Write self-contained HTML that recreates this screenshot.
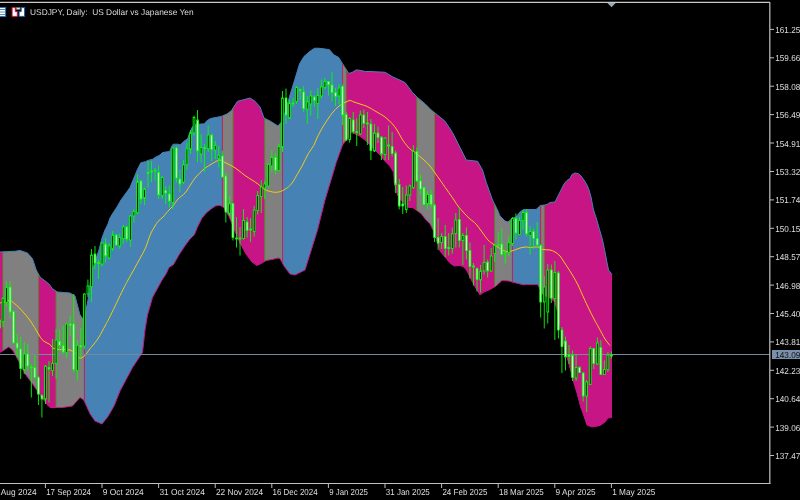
<!DOCTYPE html>
<html><head><meta charset="utf-8"><style>
html,body{margin:0;padding:0;background:#000;width:800px;height:500px;overflow:hidden}
svg{display:block}
text{text-rendering:geometricPrecision}
text{font-family:"Liberation Sans",sans-serif;font-size:8.7px;fill:#DCDCDC}
</style></head><body>
<div style="will-change:transform;width:800px;height:500px"><svg width="800" height="500" viewBox="0 0 800 500">
<rect width="800" height="500" fill="#000"/>
<g>
<polygon points="0.00,252.00 3.00,251.85 3.00,350.68 2.50,351.00 0.00,352.50" fill="#C71585"/>
<polygon points="3.00,251.85 15.00,251.25 20.00,250.50 27.50,253.00 32.50,258.75 36.25,270.00 38.38,273.97 38.38,392.56 32.50,383.75 25.00,373.75 17.50,358.75 12.50,350.00 8.75,347.00 3.00,350.68" fill="#808080"/>
<polygon points="38.38,273.97 40.00,277.00 48.75,283.75 52.50,288.75 56.06,291.07 56.06,407.50 50.00,407.50 47.50,405.00 40.00,395.00 38.38,392.56" fill="#C71585"/>
<polygon points="56.06,291.07 57.50,292.00 70.00,293.00 75.00,296.00 80.00,315.00 84.00,320.00 84.36,318.19 84.36,401.35 83.75,400.00 80.00,397.50 72.50,406.00 62.50,407.50 56.06,407.50" fill="#808080"/>
<polygon points="84.36,318.19 88.00,300.00 92.00,270.00 95.00,262.00 99.00,250.00 102.00,238.00 105.00,230.00 108.00,224.00 110.00,218.00 113.00,213.00 117.00,207.00 121.00,200.00 130.00,187.50 137.20,170.00 140.80,162.80 145.60,161.60 148.00,160.40 152.80,159.20 155.20,157.40 160.00,155.00 162.40,152.60 166.00,152.00 169.60,151.40 172.00,146.00 173.20,144.20 178.00,144.20 180.40,144.80 184.00,141.20 187.60,138.80 190.00,132.00 192.40,126.80 196.00,124.40 204.40,123.80 206.80,120.80 210.50,118.50 221.00,116.50 222.33,115.95 222.33,206.65 220.00,205.25 215.50,206.00 211.00,209.00 206.50,212.75 202.00,218.00 197.50,227.00 194.50,234.50 190.00,239.00 185.50,245.00 179.50,254.00 173.50,264.50 169.00,267.50 166.00,274.00 162.00,280.00 152.50,297.50 147.50,315.00 145.00,330.00 142.50,352.50 137.50,360.00 132.50,367.50 120.00,391.00 114.00,406.00 108.00,416.50 102.00,424.00 95.00,421.00 90.00,413.75 84.36,401.35" fill="#4682B4"/>
<polygon points="222.33,115.95 227.00,114.00 231.50,110.50 232.94,108.28 232.94,226.02 229.00,216.50 223.75,207.50 222.33,206.65" fill="#808080"/>
<polygon points="232.94,108.28 237.50,101.25 242.50,100.00 250.00,98.00 255.00,101.25 260.00,107.00 264.00,118.00 264.78,118.39 264.78,261.27 262.00,263.00 257.00,265.50 252.00,262.00 246.00,254.00 240.00,243.00 235.00,231.00 232.94,226.02" fill="#C71585"/>
<polygon points="264.78,118.39 270.00,121.00 278.00,126.00 282.46,120.64 282.46,263.12 280.00,258.50 278.00,258.00 272.00,259.50 266.00,260.50 264.78,261.27" fill="#808080"/>
<polygon points="282.46,120.64 283.00,120.00 290.00,95.00 295.00,79.00 299.50,64.00 304.00,56.50 310.00,51.25 314.50,48.25 319.00,48.25 325.00,49.00 329.50,49.75 334.00,55.00 338.50,57.25 342.25,63.25 342.60,63.81 342.60,144.87 342.50,145.00 336.25,162.50 332.50,175.00 325.00,200.00 317.50,230.00 311.25,250.00 305.00,270.00 295.00,275.00 290.00,274.00 284.00,266.00 282.46,263.12" fill="#4682B4"/>
<polygon points="342.60,63.81 346.14,69.42 346.14,140.15 342.60,144.87" fill="#808080"/>
<polygon points="346.14,69.42 346.50,70.00 349.00,73.50 353.00,72.00 356.00,70.00 358.00,70.00 365.50,71.50 370.00,71.50 385.00,72.25 392.50,76.75 397.50,79.00 405.00,82.50 412.50,92.50 416.89,96.89 416.89,210.48 416.25,210.00 412.50,207.50 408.75,207.50 405.00,205.00 401.00,200.00 397.50,195.00 394.40,183.75 393.75,172.50 390.00,166.25 385.00,161.25 380.00,155.00 375.00,150.00 370.00,145.00 365.00,140.00 360.00,136.25 355.00,133.75 351.90,131.90 346.25,140.00 346.14,140.15" fill="#C71585"/>
<polygon points="416.89,96.89 417.50,97.50 425.00,103.75 431.25,110.00 434.57,112.66 434.57,234.37 433.00,230.00 430.00,223.75 425.00,218.75 421.25,213.75 416.89,210.48" fill="#808080"/>
<polygon points="434.57,112.66 437.50,115.00 445.00,121.25 452.50,132.50 460.00,147.50 466.25,160.00 477.50,161.25 482.50,170.00 486.25,182.50 492.50,200.00 494.71,204.43 494.71,286.75 490.00,289.50 484.00,292.00 480.00,295.00 474.00,285.00 470.00,277.00 467.00,271.00 464.00,267.00 460.00,265.50 454.00,266.00 450.00,263.00 445.00,257.00 440.00,251.00 437.50,242.50 434.57,234.37" fill="#C71585"/>
<polygon points="494.71,204.43 497.50,210.00 500.00,216.00 505.00,221.00 508.00,222.00 512.00,218.50 512.40,218.35 512.40,282.10 512.00,282.00 509.00,281.00 502.00,280.50 496.00,286.00 494.71,286.75" fill="#808080"/>
<polygon points="512.40,218.35 516.00,217.00 520.00,212.00 524.00,209.50 536.00,209.50 539.00,207.00 540.00,205.50 540.70,205.43 540.70,290.75 540.00,289.00 537.50,284.50 526.00,284.50 524.00,285.00 520.00,284.00 512.40,282.10" fill="#4682B4"/>
<polygon points="540.70,205.43 544.24,205.08 544.24,295.12 542.00,294.00 540.70,290.75" fill="#808080"/>
<polygon points="544.24,205.08 545.00,205.00 548.00,204.00 550.00,202.50 555.00,202.00 557.00,198.00 560.00,192.00 564.00,184.00 567.00,180.50 570.00,178.50 572.00,174.50 575.00,173.00 578.00,173.50 581.00,176.00 584.00,180.00 587.00,185.00 589.00,190.00 591.00,197.00 593.50,210.00 596.50,219.00 599.50,229.50 602.50,240.00 604.70,250.50 607.00,262.50 608.50,270.00 612.00,274.50 612.00,417.50 608.00,418.00 605.00,422.00 600.00,425.50 592.00,427.00 587.00,425.00 584.00,416.00 581.00,408.00 577.00,393.00 573.00,380.00 569.00,364.00 565.00,350.00 560.00,325.00 557.00,310.00 555.00,302.00 550.00,298.00 544.24,295.12" fill="#C71585"/>
<polyline points="0.00,252.00 15.00,251.25 20.00,250.50 27.50,253.00 32.50,258.75 36.25,270.00 40.00,277.00 48.75,283.75 52.50,288.75 57.50,292.00 70.00,293.00 75.00,296.00 80.00,315.00 84.00,320.00 88.00,300.00 92.00,270.00 95.00,262.00 99.00,250.00 102.00,238.00 105.00,230.00 108.00,224.00 110.00,218.00 113.00,213.00 117.00,207.00 121.00,200.00 130.00,187.50 137.20,170.00 140.80,162.80 145.60,161.60 148.00,160.40 152.80,159.20 155.20,157.40 160.00,155.00 162.40,152.60 166.00,152.00 169.60,151.40 172.00,146.00 173.20,144.20 178.00,144.20 180.40,144.80 184.00,141.20 187.60,138.80 190.00,132.00 192.40,126.80 196.00,124.40 204.40,123.80 206.80,120.80 210.50,118.50 221.00,116.50 227.00,114.00 231.50,110.50 237.50,101.25 242.50,100.00 250.00,98.00 255.00,101.25 260.00,107.00 264.00,118.00 270.00,121.00 278.00,126.00 283.00,120.00 290.00,95.00 295.00,79.00 299.50,64.00 304.00,56.50 310.00,51.25 314.50,48.25 319.00,48.25 325.00,49.00 329.50,49.75 334.00,55.00 338.50,57.25 342.25,63.25 346.50,70.00 349.00,73.50 353.00,72.00 356.00,70.00 358.00,70.00 365.50,71.50 370.00,71.50 385.00,72.25 392.50,76.75 397.50,79.00 405.00,82.50 412.50,92.50 417.50,97.50 425.00,103.75 431.25,110.00 437.50,115.00 445.00,121.25 452.50,132.50 460.00,147.50 466.25,160.00 477.50,161.25 482.50,170.00 486.25,182.50 492.50,200.00 497.50,210.00 500.00,216.00 505.00,221.00 508.00,222.00 512.00,218.50 516.00,217.00 520.00,212.00 524.00,209.50 536.00,209.50 539.00,207.00 540.00,205.50 545.00,205.00 548.00,204.00 550.00,202.50 555.00,202.00 557.00,198.00 560.00,192.00 564.00,184.00 567.00,180.50 570.00,178.50 572.00,174.50 575.00,173.00 578.00,173.50 581.00,176.00 584.00,180.00 587.00,185.00 589.00,190.00 591.00,197.00 593.50,210.00 596.50,219.00 599.50,229.50 602.50,240.00 604.70,250.50 607.00,262.50 608.50,270.00 612.00,274.50" fill="none" stroke="#4682B4" stroke-width="1" />
<polyline points="0.00,352.50 2.50,351.00 8.75,347.00 12.50,350.00 17.50,358.75 25.00,373.75 32.50,383.75 40.00,395.00 47.50,405.00 50.00,407.50 62.50,407.50 72.50,406.00 80.00,397.50 83.75,400.00 90.00,413.75 95.00,421.00 102.00,424.00 108.00,416.50 114.00,406.00 120.00,391.00 132.50,367.50 137.50,360.00 142.50,352.50 145.00,330.00 147.50,315.00 152.50,297.50 162.00,280.00 166.00,274.00 169.00,267.50 173.50,264.50 179.50,254.00 185.50,245.00 190.00,239.00 194.50,234.50 197.50,227.00 202.00,218.00 206.50,212.75 211.00,209.00 215.50,206.00 220.00,205.25 223.75,207.50 229.00,216.50 235.00,231.00 240.00,243.00 246.00,254.00 252.00,262.00 257.00,265.50 262.00,263.00 266.00,260.50 272.00,259.50 278.00,258.00 280.00,258.50 284.00,266.00 290.00,274.00 295.00,275.00 305.00,270.00 311.25,250.00 317.50,230.00 325.00,200.00 332.50,175.00 336.25,162.50 342.50,145.00 346.25,140.00 351.90,131.90 355.00,133.75 360.00,136.25 365.00,140.00 370.00,145.00 375.00,150.00 380.00,155.00 385.00,161.25 390.00,166.25 393.75,172.50 394.40,183.75 397.50,195.00 401.00,200.00 405.00,205.00 408.75,207.50 412.50,207.50 416.25,210.00 421.25,213.75 425.00,218.75 430.00,223.75 433.00,230.00 437.50,242.50 440.00,251.00 445.00,257.00 450.00,263.00 454.00,266.00 460.00,265.50 464.00,267.00 467.00,271.00 470.00,277.00 474.00,285.00 480.00,295.00 484.00,292.00 490.00,289.50 496.00,286.00 502.00,280.50 509.00,281.00 512.00,282.00 520.00,284.00 524.00,285.00 526.00,284.50 537.50,284.50 540.00,289.00 542.00,294.00 550.00,298.00 555.00,302.00 557.00,310.00 560.00,325.00 565.00,350.00 569.00,364.00 573.00,380.00 577.00,393.00 581.00,408.00 584.00,416.00 587.00,425.00 592.00,427.00 600.00,425.50 605.00,422.00 608.00,418.00 612.00,417.50" fill="none" stroke="#C71585" stroke-width="1" />
<rect x="2.55" y="251.85" width="0.9" height="98.83" fill="#5F8F2A"/>
<rect x="37.92" y="273.97" width="0.9" height="118.60" fill="#5F8F2A"/>
<rect x="55.61" y="291.07" width="0.9" height="116.43" fill="#5F8F2A"/>
<rect x="83.91" y="318.19" width="0.9" height="83.16" fill="#D21E55"/>
<rect x="221.88" y="115.95" width="0.9" height="90.70" fill="#D21E55"/>
<rect x="232.49" y="108.28" width="0.9" height="117.73" fill="#5F8F2A"/>
<rect x="264.33" y="118.39" width="0.9" height="142.88" fill="#5F8F2A"/>
<rect x="282.01" y="120.64" width="0.9" height="142.47" fill="#D21E55"/>
<rect x="342.15" y="63.81" width="0.9" height="81.06" fill="#D21E55"/>
<rect x="345.69" y="69.42" width="0.9" height="70.73" fill="#5F8F2A"/>
<rect x="416.44" y="96.89" width="0.9" height="113.59" fill="#5F8F2A"/>
<rect x="434.12" y="112.66" width="0.9" height="121.71" fill="#5F8F2A"/>
<rect x="494.26" y="204.43" width="0.9" height="82.33" fill="#5F8F2A"/>
<rect x="511.95" y="218.35" width="0.9" height="63.75" fill="#D21E55"/>
<rect x="540.25" y="205.43" width="0.9" height="85.32" fill="#D21E55"/>
<rect x="543.79" y="205.08" width="0.9" height="90.04" fill="#5F8F2A"/>
<path d="M0.00,303.00 C0.67,302.83 2.50,302.42 4.00,302.00 C5.50,301.58 7.67,300.58 9.00,300.50 C10.33,300.42 11.00,300.92 12.00,301.50 C13.00,302.08 13.83,303.00 15.00,304.00 C16.17,305.00 17.50,306.00 19.00,307.50 C20.50,309.00 22.33,311.08 24.00,313.00 C25.67,314.92 27.50,317.00 29.00,319.00 C30.50,321.00 31.83,323.17 33.00,325.00 C34.17,326.83 35.00,328.33 36.00,330.00 C37.00,331.67 38.00,333.42 39.00,335.00 C40.00,336.58 40.83,338.25 42.00,339.50 C43.17,340.75 44.67,341.67 46.00,342.50 C47.33,343.33 48.83,343.58 50.00,344.50 C51.17,345.42 51.67,347.17 53.00,348.00 C54.33,348.83 56.00,349.25 58.00,349.50 C60.00,349.75 63.00,349.42 65.00,349.50 C67.00,349.58 68.50,349.50 70.00,350.00 C71.50,350.50 72.67,351.33 74.00,352.50 C75.33,353.67 76.83,356.08 78.00,357.00 C79.17,357.92 79.83,358.25 81.00,358.00 C82.17,357.75 83.67,356.83 85.00,355.50 C86.33,354.17 87.50,351.92 89.00,350.00 C90.50,348.08 92.33,346.17 94.00,344.00 C95.67,341.83 97.17,340.00 99.00,337.00 C100.83,334.00 103.04,329.67 105.00,326.00 C106.96,322.33 107.79,321.00 110.75,315.00 C113.71,309.00 119.88,295.83 122.75,290.00 C125.62,284.17 125.96,283.75 128.00,280.00 C130.04,276.25 132.25,272.50 135.00,267.50 C137.75,262.50 142.33,254.42 144.50,250.00 C146.67,245.58 146.92,243.83 148.00,241.00 C149.08,238.17 149.83,235.50 151.00,233.00 C152.17,230.50 153.83,227.92 155.00,226.00 C156.17,224.08 156.67,223.00 158.00,221.50 C159.33,220.00 161.17,218.92 163.00,217.00 C164.83,215.08 167.33,211.83 169.00,210.00 C170.67,208.17 171.50,207.83 173.00,206.00 C174.50,204.17 176.00,201.17 178.00,199.00 C180.00,196.83 182.83,195.50 185.00,193.00 C187.17,190.50 189.17,186.67 191.00,184.00 C192.83,181.33 193.83,179.50 196.00,177.00 C198.17,174.50 201.67,171.00 204.00,169.00 C206.33,167.00 208.00,166.25 210.00,165.00 C212.00,163.75 214.33,162.33 216.00,161.50 C217.67,160.67 218.50,159.83 220.00,160.00 C221.50,160.17 223.00,161.50 225.00,162.50 C227.00,163.50 229.83,164.75 232.00,166.00 C234.17,167.25 235.83,168.42 238.00,170.00 C240.17,171.58 242.67,173.83 245.00,175.50 C247.33,177.17 249.83,178.58 252.00,180.00 C254.17,181.42 256.33,182.75 258.00,184.00 C259.67,185.25 260.63,186.47 262.00,187.50 C263.37,188.53 264.10,189.40 266.20,190.20 C268.30,191.00 272.27,192.07 274.60,192.30 C276.93,192.53 278.33,192.18 280.20,191.60 C282.07,191.02 283.93,190.08 285.80,188.80 C287.67,187.52 289.53,186.23 291.40,183.90 C293.27,181.57 295.13,177.95 297.00,174.80 C298.87,171.65 300.73,168.50 302.60,165.00 C304.47,161.50 306.33,157.07 308.20,153.80 C310.07,150.53 312.42,147.87 313.80,145.40 C315.18,142.93 315.47,141.23 316.50,139.00 C317.53,136.77 318.75,134.33 320.00,132.00 C321.25,129.67 322.67,127.17 324.00,125.00 C325.33,122.83 326.50,121.17 328.00,119.00 C329.50,116.83 331.33,114.00 333.00,112.00 C334.67,110.00 336.50,108.33 338.00,107.00 C339.50,105.67 340.67,104.83 342.00,104.00 C343.33,103.17 344.67,102.58 346.00,102.00 C347.33,101.42 348.67,100.50 350.00,100.50 C351.33,100.50 352.33,101.42 354.00,102.00 C355.67,102.58 358.00,103.33 360.00,104.00 C362.00,104.67 364.33,105.33 366.00,106.00 C367.67,106.67 368.33,107.08 370.00,108.00 C371.67,108.92 373.50,110.00 376.00,111.50 C378.50,113.00 382.33,115.00 385.00,117.00 C387.67,119.00 390.00,121.33 392.00,123.50 C394.00,125.67 395.33,127.42 397.00,130.00 C398.67,132.58 400.17,136.17 402.00,139.00 C403.83,141.83 406.33,145.08 408.00,147.00 C409.67,148.92 410.33,149.17 412.00,150.50 C413.67,151.83 416.00,153.42 418.00,155.00 C420.00,156.58 422.00,158.17 424.00,160.00 C426.00,161.83 428.17,163.83 430.00,166.00 C431.83,168.17 433.33,170.67 435.00,173.00 C436.67,175.33 438.00,177.17 440.00,180.00 C442.00,182.83 444.67,186.67 447.00,190.00 C449.33,193.33 452.17,197.33 454.00,200.00 C455.83,202.67 456.33,203.83 458.00,206.00 C459.67,208.17 462.00,210.83 464.00,213.00 C466.00,215.17 468.00,217.17 470.00,219.00 C472.00,220.83 474.00,221.83 476.00,224.00 C478.00,226.17 480.00,229.33 482.00,232.00 C484.00,234.67 486.17,238.00 488.00,240.00 C489.83,242.00 491.00,242.58 493.00,244.00 C495.00,245.42 497.83,247.25 500.00,248.50 C502.17,249.75 504.33,251.00 506.00,251.50 C507.67,252.00 508.33,251.83 510.00,251.50 C511.67,251.17 514.33,250.08 516.00,249.50 C517.67,248.92 518.33,248.42 520.00,248.00 C521.67,247.58 524.33,247.08 526.00,247.00 C527.67,246.92 528.00,247.50 530.00,247.50 C532.00,247.50 535.83,246.67 538.00,247.00 C540.17,247.33 541.00,249.00 543.00,249.50 C545.00,250.00 548.00,249.58 550.00,250.00 C552.00,250.42 553.33,251.00 555.00,252.00 C556.67,253.00 558.50,254.33 560.00,256.00 C561.50,257.67 562.67,260.00 564.00,262.00 C565.33,264.00 566.50,265.67 568.00,268.00 C569.50,270.33 571.33,273.17 573.00,276.00 C574.67,278.83 576.50,282.00 578.00,285.00 C579.50,288.00 580.33,290.33 582.00,294.00 C583.67,297.67 586.00,302.83 588.00,307.00 C590.00,311.17 592.17,315.50 594.00,319.00 C595.83,322.50 597.17,324.67 599.00,328.00 C600.83,331.33 603.17,336.08 605.00,339.00 C606.83,341.92 609.17,344.42 610.00,345.50" fill="none" stroke="#F2CC10" stroke-width="1"/>
<line x1="0" y1="354.5" x2="770" y2="354.5" stroke="#778899" stroke-width="1"/>
<rect x="-0.988" y="315.00" width="0.9" height="19.00" fill="#00FF00"/>
<rect x="-1.413" y="320.00" width="1.75" height="8.00" fill="#FFF" stroke="#00FF00" stroke-width="0.9"/>
<rect x="2.550" y="297.00" width="0.9" height="30.00" fill="#00FF00"/>
<rect x="2.125" y="298.50" width="1.75" height="23.00" fill="#000" stroke="#00FF00" stroke-width="0.9"/>
<rect x="6.087" y="281.50" width="0.9" height="25.00" fill="#00FF00"/>
<rect x="5.662" y="287.00" width="1.75" height="15.50" fill="#000" stroke="#00FF00" stroke-width="0.9"/>
<rect x="9.625" y="281.00" width="0.9" height="37.00" fill="#00FF00"/>
<rect x="9.200" y="287.00" width="1.75" height="25.00" fill="#FFF" stroke="#00FF00" stroke-width="0.9"/>
<rect x="13.163" y="310.00" width="0.9" height="34.00" fill="#00FF00"/>
<rect x="12.738" y="311.50" width="1.75" height="31.50" fill="#FFF" stroke="#00FF00" stroke-width="0.9"/>
<rect x="16.700" y="334.00" width="0.9" height="23.50" fill="#00FF00"/>
<rect x="16.275" y="343.00" width="1.75" height="5.00" fill="#FFF" stroke="#00FF00" stroke-width="0.9"/>
<rect x="20.238" y="337.00" width="0.9" height="42.00" fill="#00FF00"/>
<rect x="19.812" y="349.00" width="1.75" height="19.50" fill="#FFF" stroke="#00FF00" stroke-width="0.9"/>
<rect x="23.775" y="342.00" width="0.9" height="32.00" fill="#00FF00"/>
<rect x="23.350" y="354.00" width="1.75" height="15.50" fill="#000" stroke="#00FF00" stroke-width="0.9"/>
<rect x="27.312" y="344.00" width="0.9" height="26.00" fill="#00FF00"/>
<rect x="26.887" y="354.00" width="1.75" height="12.00" fill="#FFF" stroke="#00FF00" stroke-width="0.9"/>
<rect x="30.850" y="364.00" width="0.9" height="33.50" fill="#00FF00"/>
<rect x="30.425" y="367.00" width="1.75" height="1.00" fill="#FFF" stroke="#00FF00" stroke-width="0.9"/>
<rect x="34.388" y="355.00" width="0.9" height="24.00" fill="#00FF00"/>
<rect x="33.963" y="367.50" width="1.75" height="10.00" fill="#FFF" stroke="#00FF00" stroke-width="0.9"/>
<rect x="37.925" y="376.00" width="0.9" height="29.00" fill="#00FF00"/>
<rect x="37.500" y="377.50" width="1.75" height="16.50" fill="#FFF" stroke="#00FF00" stroke-width="0.9"/>
<rect x="41.462" y="394.00" width="0.9" height="23.50" fill="#00FF00"/>
<rect x="41.038" y="395.60" width="1.75" height="3.40" fill="#FFF" stroke="#00FF00" stroke-width="0.9"/>
<rect x="45.000" y="365.00" width="0.9" height="39.00" fill="#00FF00"/>
<rect x="44.575" y="366.00" width="1.75" height="33.00" fill="#000" stroke="#00FF00" stroke-width="0.9"/>
<rect x="48.538" y="361.00" width="0.9" height="41.50" fill="#00FF00"/>
<rect x="48.113" y="367.50" width="1.75" height="1.50" fill="#FFF" stroke="#00FF00" stroke-width="0.9"/>
<rect x="52.075" y="339.00" width="0.9" height="37.00" fill="#00FF00"/>
<rect x="51.650" y="363.50" width="1.75" height="7.00" fill="#000" stroke="#00FF00" stroke-width="0.9"/>
<rect x="55.612" y="329.00" width="0.9" height="50.00" fill="#00FF00"/>
<rect x="55.188" y="340.00" width="1.75" height="23.50" fill="#000" stroke="#00FF00" stroke-width="0.9"/>
<rect x="59.150" y="330.00" width="0.9" height="21.00" fill="#00FF00"/>
<rect x="58.725" y="341.00" width="1.75" height="4.60" fill="#FFF" stroke="#00FF00" stroke-width="0.9"/>
<rect x="62.688" y="325.60" width="0.9" height="28.40" fill="#00FF00"/>
<rect x="62.263" y="345.60" width="1.75" height="6.40" fill="#FFF" stroke="#00FF00" stroke-width="0.9"/>
<rect x="66.225" y="323.00" width="0.9" height="35.00" fill="#00FF00"/>
<rect x="65.800" y="324.00" width="1.75" height="28.50" fill="#000" stroke="#00FF00" stroke-width="0.9"/>
<rect x="69.763" y="315.60" width="0.9" height="20.40" fill="#00FF00"/>
<rect x="69.338" y="324.00" width="1.75" height="1.60" fill="#FFF" stroke="#00FF00" stroke-width="0.9"/>
<rect x="73.300" y="294.00" width="0.9" height="78.50" fill="#00FF00"/>
<rect x="72.875" y="324.00" width="1.75" height="45.50" fill="#FFF" stroke="#00FF00" stroke-width="0.9"/>
<rect x="76.838" y="340.00" width="0.9" height="40.60" fill="#00FF00"/>
<rect x="76.413" y="345.60" width="1.75" height="25.00" fill="#000" stroke="#00FF00" stroke-width="0.9"/>
<rect x="80.375" y="328.00" width="0.9" height="29.50" fill="#00FF00"/>
<rect x="79.950" y="345.60" width="1.75" height="1.40" fill="#FFF" stroke="#00FF00" stroke-width="0.9"/>
<rect x="83.912" y="293.00" width="0.9" height="56.00" fill="#00FF00"/>
<rect x="83.487" y="294.00" width="1.75" height="52.00" fill="#000" stroke="#00FF00" stroke-width="0.9"/>
<rect x="87.450" y="279.50" width="0.9" height="17.50" fill="#00FF00"/>
<rect x="87.025" y="286.00" width="1.75" height="8.00" fill="#000" stroke="#00FF00" stroke-width="0.9"/>
<rect x="90.987" y="249.00" width="0.9" height="53.00" fill="#00FF00"/>
<rect x="90.562" y="255.00" width="1.75" height="31.50" fill="#000" stroke="#00FF00" stroke-width="0.9"/>
<rect x="94.525" y="246.00" width="0.9" height="23.50" fill="#00FF00"/>
<rect x="94.100" y="254.00" width="1.75" height="9.00" fill="#FFF" stroke="#00FF00" stroke-width="0.9"/>
<rect x="98.062" y="259.50" width="0.9" height="19.50" fill="#00FF00"/>
<rect x="97.638" y="262.50" width="1.75" height="1.00" fill="#FFF" stroke="#00FF00" stroke-width="0.9"/>
<rect x="101.600" y="242.00" width="0.9" height="24.50" fill="#00FF00"/>
<rect x="101.175" y="243.00" width="1.75" height="21.00" fill="#000" stroke="#00FF00" stroke-width="0.9"/>
<rect x="105.138" y="238.00" width="0.9" height="24.50" fill="#00FF00"/>
<rect x="104.713" y="244.00" width="1.75" height="12.00" fill="#FFF" stroke="#00FF00" stroke-width="0.9"/>
<rect x="108.675" y="243.00" width="0.9" height="16.50" fill="#00FF00"/>
<rect x="108.250" y="246.00" width="1.75" height="12.00" fill="#000" stroke="#00FF00" stroke-width="0.9"/>
<rect x="112.213" y="231.00" width="0.9" height="20.00" fill="#00FF00"/>
<rect x="111.788" y="235.00" width="1.75" height="14.00" fill="#000" stroke="#00FF00" stroke-width="0.9"/>
<rect x="115.750" y="234.00" width="0.9" height="12.00" fill="#00FF00"/>
<rect x="115.325" y="235.00" width="1.75" height="10.00" fill="#FFF" stroke="#00FF00" stroke-width="0.9"/>
<rect x="119.287" y="233.50" width="0.9" height="15.50" fill="#00FF00"/>
<rect x="118.862" y="237.50" width="1.75" height="8.50" fill="#000" stroke="#00FF00" stroke-width="0.9"/>
<rect x="122.825" y="225.00" width="0.9" height="19.00" fill="#00FF00"/>
<rect x="122.400" y="227.00" width="1.75" height="11.50" fill="#000" stroke="#00FF00" stroke-width="0.9"/>
<rect x="126.362" y="226.00" width="0.9" height="16.00" fill="#00FF00"/>
<rect x="125.938" y="227.00" width="1.75" height="12.00" fill="#FFF" stroke="#00FF00" stroke-width="0.9"/>
<rect x="129.900" y="215.00" width="0.9" height="32.00" fill="#00FF00"/>
<rect x="129.475" y="216.00" width="1.75" height="24.00" fill="#000" stroke="#00FF00" stroke-width="0.9"/>
<rect x="133.438" y="209.00" width="0.9" height="13.50" fill="#00FF00"/>
<rect x="133.013" y="211.50" width="1.75" height="4.50" fill="#000" stroke="#00FF00" stroke-width="0.9"/>
<rect x="136.975" y="174.00" width="0.9" height="39.50" fill="#00FF00"/>
<rect x="136.550" y="182.00" width="1.75" height="31.00" fill="#000" stroke="#00FF00" stroke-width="0.9"/>
<rect x="140.513" y="180.00" width="0.9" height="24.00" fill="#00FF00"/>
<rect x="140.088" y="181.00" width="1.75" height="18.00" fill="#FFF" stroke="#00FF00" stroke-width="0.9"/>
<rect x="144.050" y="187.50" width="0.9" height="17.50" fill="#00FF00"/>
<rect x="143.625" y="189.00" width="1.75" height="9.00" fill="#000" stroke="#00FF00" stroke-width="0.9"/>
<rect x="147.588" y="161.00" width="0.9" height="27.00" fill="#00FF00"/>
<rect x="147.162" y="172.50" width="1.75" height="1.00" fill="#FFF" stroke="#00FF00" stroke-width="0.9"/>
<rect x="151.125" y="161.00" width="0.9" height="21.00" fill="#00FF00"/>
<rect x="150.700" y="171.00" width="1.75" height="1.00" fill="#FFF" stroke="#00FF00" stroke-width="0.9"/>
<rect x="154.663" y="168.00" width="0.9" height="12.60" fill="#00FF00"/>
<rect x="154.238" y="170.00" width="1.75" height="0.90" fill="#FFF" stroke="#00FF00" stroke-width="0.9"/>
<rect x="158.200" y="165.60" width="0.9" height="33.40" fill="#00FF00"/>
<rect x="157.775" y="172.50" width="1.75" height="22.50" fill="#FFF" stroke="#00FF00" stroke-width="0.9"/>
<rect x="161.738" y="175.60" width="0.9" height="23.40" fill="#00FF00"/>
<rect x="161.312" y="177.50" width="1.75" height="18.10" fill="#000" stroke="#00FF00" stroke-width="0.9"/>
<rect x="165.275" y="186.00" width="0.9" height="18.00" fill="#00FF00"/>
<rect x="164.850" y="190.60" width="1.75" height="2.40" fill="#FFF" stroke="#00FF00" stroke-width="0.9"/>
<rect x="168.813" y="185.60" width="0.9" height="21.90" fill="#00FF00"/>
<rect x="168.388" y="194.00" width="1.75" height="7.00" fill="#FFF" stroke="#00FF00" stroke-width="0.9"/>
<rect x="172.350" y="147.50" width="0.9" height="61.50" fill="#00FF00"/>
<rect x="171.925" y="148.00" width="1.75" height="54.50" fill="#000" stroke="#00FF00" stroke-width="0.9"/>
<rect x="175.888" y="146.00" width="0.9" height="36.50" fill="#00FF00"/>
<rect x="175.463" y="148.00" width="1.75" height="30.00" fill="#FFF" stroke="#00FF00" stroke-width="0.9"/>
<rect x="179.425" y="170.00" width="0.9" height="22.50" fill="#00FF00"/>
<rect x="179.000" y="179.00" width="1.75" height="5.00" fill="#FFF" stroke="#00FF00" stroke-width="0.9"/>
<rect x="182.963" y="160.00" width="0.9" height="24.00" fill="#00FF00"/>
<rect x="182.537" y="165.00" width="1.75" height="17.00" fill="#000" stroke="#00FF00" stroke-width="0.9"/>
<rect x="186.500" y="142.50" width="0.9" height="27.50" fill="#00FF00"/>
<rect x="186.075" y="148.75" width="1.75" height="15.65" fill="#000" stroke="#00FF00" stroke-width="0.9"/>
<rect x="190.038" y="130.00" width="0.9" height="24.00" fill="#00FF00"/>
<rect x="189.613" y="133.00" width="1.75" height="16.40" fill="#000" stroke="#00FF00" stroke-width="0.9"/>
<rect x="193.575" y="115.60" width="0.9" height="20.00" fill="#00FF00"/>
<rect x="193.150" y="117.50" width="1.75" height="15.50" fill="#000" stroke="#00FF00" stroke-width="0.9"/>
<rect x="197.113" y="110.00" width="0.9" height="52.00" fill="#00FF00"/>
<rect x="196.688" y="120.00" width="1.75" height="31.00" fill="#FFF" stroke="#00FF00" stroke-width="0.9"/>
<rect x="200.650" y="134.00" width="0.9" height="28.50" fill="#00FF00"/>
<rect x="200.225" y="147.50" width="1.75" height="6.50" fill="#000" stroke="#00FF00" stroke-width="0.9"/>
<rect x="204.188" y="144.00" width="0.9" height="28.00" fill="#00FF00"/>
<rect x="203.763" y="147.50" width="1.75" height="0.90" fill="#FFF" stroke="#00FF00" stroke-width="0.9"/>
<rect x="207.725" y="125.00" width="0.9" height="27.00" fill="#00FF00"/>
<rect x="207.300" y="135.00" width="1.75" height="13.75" fill="#000" stroke="#00FF00" stroke-width="0.9"/>
<rect x="211.263" y="133.75" width="0.9" height="27.25" fill="#00FF00"/>
<rect x="210.838" y="135.00" width="1.75" height="14.40" fill="#FFF" stroke="#00FF00" stroke-width="0.9"/>
<rect x="214.800" y="141.00" width="0.9" height="18.00" fill="#00FF00"/>
<rect x="214.375" y="145.60" width="1.75" height="4.40" fill="#000" stroke="#00FF00" stroke-width="0.9"/>
<rect x="218.338" y="146.00" width="0.9" height="21.50" fill="#00FF00"/>
<rect x="217.912" y="155.60" width="1.75" height="2.40" fill="#000" stroke="#00FF00" stroke-width="0.9"/>
<rect x="267.863" y="163.00" width="0.9" height="24.50" fill="#00FF00"/>
<rect x="267.438" y="164.40" width="1.75" height="21.60" fill="#000" stroke="#00FF00" stroke-width="0.9"/>
<rect x="271.400" y="150.50" width="0.9" height="21.50" fill="#00FF00"/>
<rect x="270.975" y="157.50" width="1.75" height="8.50" fill="#000" stroke="#00FF00" stroke-width="0.9"/>
<rect x="274.938" y="153.00" width="0.9" height="21.40" fill="#00FF00"/>
<rect x="274.512" y="157.50" width="1.75" height="12.50" fill="#FFF" stroke="#00FF00" stroke-width="0.9"/>
<rect x="278.475" y="143.50" width="0.9" height="27.50" fill="#00FF00"/>
<rect x="278.050" y="146.50" width="1.75" height="24.10" fill="#000" stroke="#00FF00" stroke-width="0.9"/>
<rect x="282.013" y="91.00" width="0.9" height="61.00" fill="#00FF00"/>
<rect x="281.588" y="98.00" width="1.75" height="49.00" fill="#000" stroke="#00FF00" stroke-width="0.9"/>
<rect x="221.875" y="151.00" width="0.9" height="26.00" fill="#00FF00"/>
<rect x="221.450" y="156.00" width="1.75" height="21.00" fill="#FFF" stroke="#00FF00" stroke-width="0.9"/>
<rect x="225.413" y="172.50" width="0.9" height="50.00" fill="#00FF00"/>
<rect x="224.988" y="176.00" width="1.75" height="36.00" fill="#FFF" stroke="#00FF00" stroke-width="0.9"/>
<rect x="228.950" y="195.60" width="0.9" height="19.90" fill="#00FF00"/>
<rect x="228.525" y="204.00" width="1.75" height="9.00" fill="#000" stroke="#00FF00" stroke-width="0.9"/>
<rect x="232.488" y="203.50" width="0.9" height="37.00" fill="#00FF00"/>
<rect x="232.062" y="203.50" width="1.75" height="34.00" fill="#FFF" stroke="#00FF00" stroke-width="0.9"/>
<rect x="236.025" y="217.00" width="0.9" height="30.50" fill="#00FF00"/>
<rect x="235.600" y="238.00" width="1.75" height="1.00" fill="#FFF" stroke="#00FF00" stroke-width="0.9"/>
<rect x="239.563" y="227.00" width="0.9" height="28.50" fill="#00FF00"/>
<rect x="239.138" y="238.00" width="1.75" height="1.00" fill="#FFF" stroke="#00FF00" stroke-width="0.9"/>
<rect x="243.100" y="209.00" width="0.9" height="30.50" fill="#00FF00"/>
<rect x="242.675" y="220.50" width="1.75" height="18.00" fill="#000" stroke="#00FF00" stroke-width="0.9"/>
<rect x="246.638" y="217.00" width="0.9" height="20.50" fill="#00FF00"/>
<rect x="246.213" y="222.00" width="1.75" height="8.50" fill="#FFF" stroke="#00FF00" stroke-width="0.9"/>
<rect x="250.175" y="218.00" width="0.9" height="24.00" fill="#00FF00"/>
<rect x="249.750" y="229.00" width="1.75" height="1.00" fill="#FFF" stroke="#00FF00" stroke-width="0.9"/>
<rect x="253.713" y="206.00" width="0.9" height="30.50" fill="#00FF00"/>
<rect x="253.287" y="210.00" width="1.75" height="21.50" fill="#000" stroke="#00FF00" stroke-width="0.9"/>
<rect x="257.250" y="191.00" width="0.9" height="23.50" fill="#00FF00"/>
<rect x="256.825" y="195.50" width="1.75" height="15.00" fill="#000" stroke="#00FF00" stroke-width="0.9"/>
<rect x="260.788" y="180.00" width="0.9" height="33.00" fill="#00FF00"/>
<rect x="260.363" y="187.00" width="1.75" height="9.50" fill="#000" stroke="#00FF00" stroke-width="0.9"/>
<rect x="264.325" y="180.60" width="0.9" height="18.40" fill="#00FF00"/>
<rect x="263.900" y="184.00" width="1.75" height="4.00" fill="#000" stroke="#00FF00" stroke-width="0.9"/>
<rect x="285.550" y="88.50" width="0.9" height="35.50" fill="#00FF00"/>
<rect x="285.125" y="98.00" width="1.75" height="17.00" fill="#FFF" stroke="#00FF00" stroke-width="0.9"/>
<rect x="289.088" y="100.00" width="0.9" height="19.00" fill="#00FF00"/>
<rect x="288.663" y="103.50" width="1.75" height="14.50" fill="#000" stroke="#00FF00" stroke-width="0.9"/>
<rect x="292.625" y="98.00" width="0.9" height="9.00" fill="#00FF00"/>
<rect x="292.200" y="103.00" width="1.75" height="1.00" fill="#FFF" stroke="#00FF00" stroke-width="0.9"/>
<rect x="296.163" y="86.00" width="0.9" height="18.00" fill="#00FF00"/>
<rect x="295.738" y="87.50" width="1.75" height="14.00" fill="#000" stroke="#00FF00" stroke-width="0.9"/>
<rect x="299.700" y="88.50" width="0.9" height="11.50" fill="#00FF00"/>
<rect x="299.275" y="89.50" width="1.75" height="1.00" fill="#FFF" stroke="#00FF00" stroke-width="0.9"/>
<rect x="303.238" y="86.00" width="0.9" height="26.00" fill="#00FF00"/>
<rect x="302.812" y="92.00" width="1.75" height="16.50" fill="#FFF" stroke="#00FF00" stroke-width="0.9"/>
<rect x="306.775" y="96.00" width="0.9" height="28.00" fill="#00FF00"/>
<rect x="306.350" y="102.00" width="1.75" height="7.00" fill="#000" stroke="#00FF00" stroke-width="0.9"/>
<rect x="310.312" y="90.50" width="0.9" height="25.00" fill="#00FF00"/>
<rect x="309.887" y="96.00" width="1.75" height="8.00" fill="#000" stroke="#00FF00" stroke-width="0.9"/>
<rect x="313.850" y="95.00" width="0.9" height="12.00" fill="#00FF00"/>
<rect x="313.425" y="97.00" width="1.75" height="3.50" fill="#FFF" stroke="#00FF00" stroke-width="0.9"/>
<rect x="317.388" y="88.00" width="0.9" height="31.00" fill="#00FF00"/>
<rect x="316.963" y="95.50" width="1.75" height="8.00" fill="#000" stroke="#00FF00" stroke-width="0.9"/>
<rect x="320.925" y="79.50" width="0.9" height="19.00" fill="#00FF00"/>
<rect x="320.500" y="87.00" width="1.75" height="9.00" fill="#000" stroke="#00FF00" stroke-width="0.9"/>
<rect x="324.463" y="78.00" width="0.9" height="11.50" fill="#00FF00"/>
<rect x="324.038" y="81.50" width="1.75" height="6.00" fill="#000" stroke="#00FF00" stroke-width="0.9"/>
<rect x="328.000" y="81.00" width="0.9" height="14.50" fill="#00FF00"/>
<rect x="327.575" y="81.50" width="1.75" height="3.50" fill="#FFF" stroke="#00FF00" stroke-width="0.9"/>
<rect x="331.538" y="72.00" width="0.9" height="29.50" fill="#00FF00"/>
<rect x="331.113" y="85.00" width="1.75" height="7.50" fill="#FFF" stroke="#00FF00" stroke-width="0.9"/>
<rect x="335.075" y="88.00" width="0.9" height="18.00" fill="#00FF00"/>
<rect x="334.650" y="92.50" width="1.75" height="4.00" fill="#FFF" stroke="#00FF00" stroke-width="0.9"/>
<rect x="338.613" y="84.00" width="0.9" height="20.00" fill="#00FF00"/>
<rect x="338.188" y="88.00" width="1.75" height="8.00" fill="#000" stroke="#00FF00" stroke-width="0.9"/>
<rect x="342.150" y="84.50" width="0.9" height="40.50" fill="#00FF00"/>
<rect x="341.725" y="86.50" width="1.75" height="28.50" fill="#FFF" stroke="#00FF00" stroke-width="0.9"/>
<rect x="345.688" y="112.00" width="0.9" height="29.00" fill="#00FF00"/>
<rect x="345.262" y="114.50" width="1.75" height="25.50" fill="#FFF" stroke="#00FF00" stroke-width="0.9"/>
<rect x="349.225" y="117.00" width="0.9" height="25.50" fill="#00FF00"/>
<rect x="348.800" y="118.50" width="1.75" height="21.00" fill="#000" stroke="#00FF00" stroke-width="0.9"/>
<rect x="352.763" y="112.00" width="0.9" height="22.00" fill="#00FF00"/>
<rect x="352.338" y="120.00" width="1.75" height="11.50" fill="#FFF" stroke="#00FF00" stroke-width="0.9"/>
<rect x="356.300" y="118.50" width="0.9" height="27.50" fill="#00FF00"/>
<rect x="355.875" y="131.50" width="1.75" height="1.00" fill="#FFF" stroke="#00FF00" stroke-width="0.9"/>
<rect x="359.838" y="110.50" width="0.9" height="24.50" fill="#00FF00"/>
<rect x="359.413" y="115.00" width="1.75" height="19.00" fill="#000" stroke="#00FF00" stroke-width="0.9"/>
<rect x="363.375" y="109.50" width="0.9" height="18.50" fill="#00FF00"/>
<rect x="362.950" y="115.00" width="1.75" height="8.50" fill="#FFF" stroke="#00FF00" stroke-width="0.9"/>
<rect x="366.913" y="112.00" width="0.9" height="33.00" fill="#00FF00"/>
<rect x="366.488" y="123.00" width="1.75" height="1.00" fill="#FFF" stroke="#00FF00" stroke-width="0.9"/>
<rect x="370.450" y="119.00" width="0.9" height="41.00" fill="#00FF00"/>
<rect x="370.025" y="124.00" width="1.75" height="26.50" fill="#FFF" stroke="#00FF00" stroke-width="0.9"/>
<rect x="373.988" y="124.00" width="0.9" height="28.00" fill="#00FF00"/>
<rect x="373.562" y="133.00" width="1.75" height="18.00" fill="#000" stroke="#00FF00" stroke-width="0.9"/>
<rect x="377.525" y="126.50" width="0.9" height="16.50" fill="#00FF00"/>
<rect x="377.100" y="133.00" width="1.75" height="4.50" fill="#FFF" stroke="#00FF00" stroke-width="0.9"/>
<rect x="381.062" y="136.50" width="0.9" height="23.50" fill="#00FF00"/>
<rect x="380.637" y="137.00" width="1.75" height="17.00" fill="#FFF" stroke="#00FF00" stroke-width="0.9"/>
<rect x="384.600" y="137.50" width="0.9" height="22.50" fill="#00FF00"/>
<rect x="384.175" y="138.00" width="1.75" height="16.50" fill="#000" stroke="#00FF00" stroke-width="0.9"/>
<rect x="388.138" y="125.50" width="0.9" height="34.50" fill="#00FF00"/>
<rect x="387.713" y="145.00" width="1.75" height="1.00" fill="#FFF" stroke="#00FF00" stroke-width="0.9"/>
<rect x="391.675" y="132.00" width="0.9" height="24.50" fill="#00FF00"/>
<rect x="391.250" y="146.50" width="1.75" height="7.00" fill="#FFF" stroke="#00FF00" stroke-width="0.9"/>
<rect x="395.213" y="150.50" width="0.9" height="42.50" fill="#00FF00"/>
<rect x="394.788" y="153.00" width="1.75" height="31.40" fill="#FFF" stroke="#00FF00" stroke-width="0.9"/>
<rect x="398.750" y="179.00" width="0.9" height="30.40" fill="#00FF00"/>
<rect x="398.325" y="184.40" width="1.75" height="21.60" fill="#FFF" stroke="#00FF00" stroke-width="0.9"/>
<rect x="402.288" y="187.00" width="0.9" height="27.00" fill="#00FF00"/>
<rect x="401.863" y="204.00" width="1.75" height="2.00" fill="#FFF" stroke="#00FF00" stroke-width="0.9"/>
<rect x="405.825" y="185.60" width="0.9" height="27.40" fill="#00FF00"/>
<rect x="405.400" y="195.00" width="1.75" height="14.40" fill="#000" stroke="#00FF00" stroke-width="0.9"/>
<rect x="409.363" y="184.40" width="0.9" height="16.60" fill="#00FF00"/>
<rect x="408.938" y="186.00" width="1.75" height="9.00" fill="#000" stroke="#00FF00" stroke-width="0.9"/>
<rect x="412.900" y="145.00" width="0.9" height="44.00" fill="#00FF00"/>
<rect x="412.475" y="151.50" width="1.75" height="36.00" fill="#000" stroke="#00FF00" stroke-width="0.9"/>
<rect x="416.438" y="147.50" width="0.9" height="34.50" fill="#00FF00"/>
<rect x="416.012" y="151.50" width="1.75" height="29.50" fill="#FFF" stroke="#00FF00" stroke-width="0.9"/>
<rect x="419.975" y="174.40" width="0.9" height="20.00" fill="#00FF00"/>
<rect x="419.550" y="181.00" width="1.75" height="8.00" fill="#FFF" stroke="#00FF00" stroke-width="0.9"/>
<rect x="423.513" y="186.00" width="0.9" height="19.60" fill="#00FF00"/>
<rect x="423.088" y="187.50" width="1.75" height="16.90" fill="#FFF" stroke="#00FF00" stroke-width="0.9"/>
<rect x="427.050" y="191.00" width="0.9" height="18.40" fill="#00FF00"/>
<rect x="426.625" y="194.40" width="1.75" height="9.35" fill="#000" stroke="#00FF00" stroke-width="0.9"/>
<rect x="430.588" y="189.40" width="0.9" height="18.10" fill="#00FF00"/>
<rect x="430.163" y="194.40" width="1.75" height="10.00" fill="#FFF" stroke="#00FF00" stroke-width="0.9"/>
<rect x="434.125" y="203.75" width="0.9" height="38.25" fill="#00FF00"/>
<rect x="433.700" y="205.00" width="1.75" height="32.50" fill="#FFF" stroke="#00FF00" stroke-width="0.9"/>
<rect x="437.663" y="218.00" width="0.9" height="32.00" fill="#00FF00"/>
<rect x="437.238" y="237.50" width="1.75" height="5.50" fill="#FFF" stroke="#00FF00" stroke-width="0.9"/>
<rect x="441.200" y="233.00" width="0.9" height="16.00" fill="#00FF00"/>
<rect x="440.775" y="236.50" width="1.75" height="6.00" fill="#000" stroke="#00FF00" stroke-width="0.9"/>
<rect x="444.738" y="225.00" width="0.9" height="32.00" fill="#00FF00"/>
<rect x="444.312" y="236.50" width="1.75" height="12.00" fill="#FFF" stroke="#00FF00" stroke-width="0.9"/>
<rect x="448.275" y="233.00" width="0.9" height="22.50" fill="#00FF00"/>
<rect x="447.850" y="247.50" width="1.75" height="1.00" fill="#FFF" stroke="#00FF00" stroke-width="0.9"/>
<rect x="451.812" y="227.50" width="0.9" height="26.00" fill="#00FF00"/>
<rect x="451.387" y="234.00" width="1.75" height="14.50" fill="#000" stroke="#00FF00" stroke-width="0.9"/>
<rect x="455.350" y="213.00" width="0.9" height="34.50" fill="#00FF00"/>
<rect x="454.925" y="220.00" width="1.75" height="13.50" fill="#000" stroke="#00FF00" stroke-width="0.9"/>
<rect x="458.888" y="207.00" width="0.9" height="40.50" fill="#00FF00"/>
<rect x="458.463" y="219.50" width="1.75" height="21.00" fill="#FFF" stroke="#00FF00" stroke-width="0.9"/>
<rect x="462.425" y="233.00" width="0.9" height="32.00" fill="#00FF00"/>
<rect x="462.000" y="235.50" width="1.75" height="5.00" fill="#000" stroke="#00FF00" stroke-width="0.9"/>
<rect x="465.963" y="227.50" width="0.9" height="32.00" fill="#00FF00"/>
<rect x="465.538" y="235.50" width="1.75" height="15.00" fill="#FFF" stroke="#00FF00" stroke-width="0.9"/>
<rect x="483.650" y="245.00" width="0.9" height="29.50" fill="#00FF00"/>
<rect x="483.225" y="262.50" width="1.75" height="8.50" fill="#000" stroke="#00FF00" stroke-width="0.9"/>
<rect x="487.188" y="259.50" width="0.9" height="18.00" fill="#00FF00"/>
<rect x="486.762" y="262.00" width="1.75" height="9.00" fill="#FFF" stroke="#00FF00" stroke-width="0.9"/>
<rect x="490.725" y="248.00" width="0.9" height="24.00" fill="#00FF00"/>
<rect x="490.300" y="256.00" width="1.75" height="15.00" fill="#000" stroke="#00FF00" stroke-width="0.9"/>
<rect x="494.263" y="244.00" width="0.9" height="18.00" fill="#00FF00"/>
<rect x="493.838" y="245.50" width="1.75" height="8.00" fill="#000" stroke="#00FF00" stroke-width="0.9"/>
<rect x="497.800" y="232.00" width="0.9" height="15.50" fill="#00FF00"/>
<rect x="497.375" y="244.50" width="1.75" height="1.00" fill="#FFF" stroke="#00FF00" stroke-width="0.9"/>
<rect x="501.338" y="228.00" width="0.9" height="27.50" fill="#00FF00"/>
<rect x="500.913" y="244.00" width="1.75" height="10.50" fill="#FFF" stroke="#00FF00" stroke-width="0.9"/>
<rect x="504.875" y="250.00" width="0.9" height="13.50" fill="#00FF00"/>
<rect x="504.450" y="253.00" width="1.75" height="1.00" fill="#000" stroke="#00FF00" stroke-width="0.9"/>
<rect x="508.413" y="236.50" width="0.9" height="20.00" fill="#00FF00"/>
<rect x="507.988" y="242.50" width="1.75" height="10.00" fill="#000" stroke="#00FF00" stroke-width="0.9"/>
<rect x="469.500" y="242.50" width="0.9" height="36.00" fill="#00FF00"/>
<rect x="469.075" y="250.50" width="1.75" height="16.00" fill="#FFF" stroke="#00FF00" stroke-width="0.9"/>
<rect x="473.038" y="263.00" width="0.9" height="22.50" fill="#00FF00"/>
<rect x="472.613" y="266.00" width="1.75" height="1.00" fill="#FFF" stroke="#00FF00" stroke-width="0.9"/>
<rect x="476.575" y="267.50" width="0.9" height="24.00" fill="#00FF00"/>
<rect x="476.150" y="268.50" width="1.75" height="11.00" fill="#FFF" stroke="#00FF00" stroke-width="0.9"/>
<rect x="480.113" y="265.00" width="0.9" height="27.50" fill="#00FF00"/>
<rect x="479.688" y="271.00" width="1.75" height="9.00" fill="#000" stroke="#00FF00" stroke-width="0.9"/>
<rect x="511.950" y="217.00" width="0.9" height="29.00" fill="#00FF00"/>
<rect x="511.525" y="218.50" width="1.75" height="25.00" fill="#000" stroke="#00FF00" stroke-width="0.9"/>
<rect x="515.487" y="213.50" width="0.9" height="26.00" fill="#00FF00"/>
<rect x="515.062" y="218.50" width="1.75" height="14.50" fill="#FFF" stroke="#00FF00" stroke-width="0.9"/>
<rect x="519.025" y="217.00" width="0.9" height="18.00" fill="#00FF00"/>
<rect x="518.600" y="220.50" width="1.75" height="14.00" fill="#000" stroke="#00FF00" stroke-width="0.9"/>
<rect x="522.562" y="209.50" width="0.9" height="20.00" fill="#00FF00"/>
<rect x="522.138" y="212.50" width="1.75" height="8.00" fill="#000" stroke="#00FF00" stroke-width="0.9"/>
<rect x="526.100" y="209.00" width="0.9" height="27.50" fill="#00FF00"/>
<rect x="525.675" y="212.50" width="1.75" height="21.50" fill="#FFF" stroke="#00FF00" stroke-width="0.9"/>
<rect x="529.637" y="226.00" width="0.9" height="28.50" fill="#00FF00"/>
<rect x="529.212" y="231.50" width="1.75" height="4.00" fill="#000" stroke="#00FF00" stroke-width="0.9"/>
<rect x="533.175" y="228.50" width="0.9" height="20.50" fill="#00FF00"/>
<rect x="532.750" y="231.50" width="1.75" height="7.00" fill="#FFF" stroke="#00FF00" stroke-width="0.9"/>
<rect x="536.712" y="222.00" width="0.9" height="24.00" fill="#00FF00"/>
<rect x="536.288" y="238.50" width="1.75" height="6.50" fill="#FFF" stroke="#00FF00" stroke-width="0.9"/>
<rect x="540.250" y="244.00" width="0.9" height="73.50" fill="#00FF00"/>
<rect x="539.825" y="245.50" width="1.75" height="56.50" fill="#FFF" stroke="#00FF00" stroke-width="0.9"/>
<rect x="543.788" y="276.00" width="0.9" height="52.50" fill="#00FF00"/>
<rect x="543.363" y="287.00" width="1.75" height="15.00" fill="#000" stroke="#00FF00" stroke-width="0.9"/>
<rect x="547.325" y="264.00" width="0.9" height="59.50" fill="#00FF00"/>
<rect x="546.900" y="270.00" width="1.75" height="42.00" fill="#000" stroke="#00FF00" stroke-width="0.9"/>
<rect x="550.862" y="264.50" width="0.9" height="38.50" fill="#00FF00"/>
<rect x="550.438" y="270.00" width="1.75" height="28.00" fill="#FFF" stroke="#00FF00" stroke-width="0.9"/>
<rect x="554.400" y="261.00" width="0.9" height="79.00" fill="#00FF00"/>
<rect x="553.975" y="272.50" width="1.75" height="26.00" fill="#000" stroke="#00FF00" stroke-width="0.9"/>
<rect x="557.938" y="271.00" width="0.9" height="67.50" fill="#00FF00"/>
<rect x="557.513" y="273.00" width="1.75" height="57.00" fill="#FFF" stroke="#00FF00" stroke-width="0.9"/>
<rect x="561.475" y="327.00" width="0.9" height="46.00" fill="#00FF00"/>
<rect x="561.050" y="330.00" width="1.75" height="16.50" fill="#FFF" stroke="#00FF00" stroke-width="0.9"/>
<rect x="565.012" y="336.50" width="0.9" height="34.00" fill="#00FF00"/>
<rect x="564.587" y="341.00" width="1.75" height="16.00" fill="#FFF" stroke="#00FF00" stroke-width="0.9"/>
<rect x="568.550" y="345.00" width="0.9" height="19.00" fill="#00FF00"/>
<rect x="568.125" y="355.00" width="1.75" height="1.50" fill="#FFF" stroke="#00FF00" stroke-width="0.9"/>
<rect x="572.087" y="350.50" width="0.9" height="30.50" fill="#00FF00"/>
<rect x="571.663" y="355.00" width="1.75" height="22.50" fill="#FFF" stroke="#00FF00" stroke-width="0.9"/>
<rect x="575.625" y="354.50" width="0.9" height="26.50" fill="#00FF00"/>
<rect x="575.200" y="367.50" width="1.75" height="10.50" fill="#000" stroke="#00FF00" stroke-width="0.9"/>
<rect x="579.163" y="366.00" width="0.9" height="7.00" fill="#00FF00"/>
<rect x="578.738" y="367.50" width="1.75" height="5.00" fill="#FFF" stroke="#00FF00" stroke-width="0.9"/>
<rect x="582.700" y="372.00" width="0.9" height="29.50" fill="#00FF00"/>
<rect x="582.275" y="373.00" width="1.75" height="23.00" fill="#FFF" stroke="#00FF00" stroke-width="0.9"/>
<rect x="586.237" y="380.00" width="0.9" height="32.00" fill="#00FF00"/>
<rect x="585.812" y="382.00" width="1.75" height="14.00" fill="#000" stroke="#00FF00" stroke-width="0.9"/>
<rect x="589.775" y="346.50" width="0.9" height="38.50" fill="#00FF00"/>
<rect x="589.350" y="348.50" width="1.75" height="36.00" fill="#000" stroke="#00FF00" stroke-width="0.9"/>
<rect x="593.312" y="348.00" width="0.9" height="21.00" fill="#00FF00"/>
<rect x="592.888" y="348.50" width="1.75" height="15.00" fill="#FFF" stroke="#00FF00" stroke-width="0.9"/>
<rect x="596.850" y="337.50" width="0.9" height="27.50" fill="#00FF00"/>
<rect x="596.425" y="343.00" width="1.75" height="21.00" fill="#000" stroke="#00FF00" stroke-width="0.9"/>
<rect x="600.387" y="340.00" width="0.9" height="35.00" fill="#00FF00"/>
<rect x="599.962" y="347.50" width="1.75" height="27.00" fill="#FFF" stroke="#00FF00" stroke-width="0.9"/>
<rect x="603.925" y="360.50" width="0.9" height="14.50" fill="#00FF00"/>
<rect x="603.500" y="369.50" width="1.75" height="5.00" fill="#000" stroke="#00FF00" stroke-width="0.9"/>
<rect x="607.462" y="352.00" width="0.9" height="20.00" fill="#00FF00"/>
<rect x="607.038" y="355.00" width="1.75" height="14.50" fill="#000" stroke="#00FF00" stroke-width="0.9"/>
<rect x="611.000" y="351.50" width="0.9" height="7.00" fill="#00FF00"/>
<rect x="610.575" y="355.00" width="1.75" height="1.00" fill="#FFF" stroke="#00FF00" stroke-width="0.9"/>
</g>
<rect x="770" y="0" width="30" height="500" fill="#000"/>
<rect x="0" y="483" width="800" height="17" fill="#000"/>
<line x1="0" y1="2.4" x2="770" y2="2.4" stroke="#C8C8C8" stroke-width="1.2"/>
<polygon points="607.4,3 615.6,3 611.5,7.2" fill="#93A9C2"/>
<line x1="769.8" y1="2" x2="769.8" y2="483.5" stroke="#B4B4B4" stroke-width="1.3"/>
<line x1="0" y1="483.5" x2="770.5" y2="483.5" stroke="#C0C0C0" stroke-width="1"/>
<rect x="770" y="28.9" width="4" height="1" fill="#BDBDBD"/>
<text x="775.3" y="32.9" textLength="29.5" lengthAdjust="spacingAndGlyphs">161.250</text>
<rect x="770" y="57.3" width="4" height="1" fill="#BDBDBD"/>
<text x="775.3" y="61.3" textLength="29.5" lengthAdjust="spacingAndGlyphs">159.665</text>
<rect x="770" y="85.7" width="4" height="1" fill="#BDBDBD"/>
<text x="775.3" y="89.7" textLength="29.5" lengthAdjust="spacingAndGlyphs">158.080</text>
<rect x="770" y="114.1" width="4" height="1" fill="#BDBDBD"/>
<text x="775.3" y="118.1" textLength="29.5" lengthAdjust="spacingAndGlyphs">156.495</text>
<rect x="770" y="142.5" width="4" height="1" fill="#BDBDBD"/>
<text x="775.3" y="146.5" textLength="29.5" lengthAdjust="spacingAndGlyphs">154.910</text>
<rect x="770" y="171.0" width="4" height="1" fill="#BDBDBD"/>
<text x="775.3" y="175.0" textLength="29.5" lengthAdjust="spacingAndGlyphs">153.325</text>
<rect x="770" y="199.4" width="4" height="1" fill="#BDBDBD"/>
<text x="775.3" y="203.4" textLength="29.5" lengthAdjust="spacingAndGlyphs">151.740</text>
<rect x="770" y="227.8" width="4" height="1" fill="#BDBDBD"/>
<text x="775.3" y="231.8" textLength="29.5" lengthAdjust="spacingAndGlyphs">150.155</text>
<rect x="770" y="256.2" width="4" height="1" fill="#BDBDBD"/>
<text x="775.3" y="260.2" textLength="29.5" lengthAdjust="spacingAndGlyphs">148.570</text>
<rect x="770" y="284.6" width="4" height="1" fill="#BDBDBD"/>
<text x="775.3" y="288.6" textLength="29.5" lengthAdjust="spacingAndGlyphs">146.985</text>
<rect x="770" y="313.0" width="4" height="1" fill="#BDBDBD"/>
<text x="775.3" y="317.0" textLength="29.5" lengthAdjust="spacingAndGlyphs">145.400</text>
<rect x="770" y="341.4" width="4" height="1" fill="#BDBDBD"/>
<text x="775.3" y="345.4" textLength="29.5" lengthAdjust="spacingAndGlyphs">143.815</text>
<rect x="770" y="369.8" width="4" height="1" fill="#BDBDBD"/>
<text x="775.3" y="373.8" textLength="29.5" lengthAdjust="spacingAndGlyphs">142.230</text>
<rect x="770" y="398.2" width="4" height="1" fill="#BDBDBD"/>
<text x="775.3" y="402.2" textLength="29.5" lengthAdjust="spacingAndGlyphs">140.645</text>
<rect x="770" y="426.6" width="4" height="1" fill="#BDBDBD"/>
<text x="775.3" y="430.6" textLength="29.5" lengthAdjust="spacingAndGlyphs">139.060</text>
<rect x="770" y="455.0" width="4" height="1" fill="#BDBDBD"/>
<text x="775.3" y="459.0" textLength="29.5" lengthAdjust="spacingAndGlyphs">137.475</text>
<rect x="-11.7" y="483" width="1" height="5" fill="#BDBDBD"/>
<text x="-10.4" y="494.8" textLength="47.0" lengthAdjust="spacingAndGlyphs">28 Aug 2024</text>
<rect x="44.9" y="483" width="1" height="5" fill="#BDBDBD"/>
<text x="46.2" y="494.8" textLength="44.8" lengthAdjust="spacingAndGlyphs">17 Sep 2024</text>
<rect x="101.5" y="483" width="1" height="5" fill="#BDBDBD"/>
<text x="102.8" y="494.8" textLength="41.0" lengthAdjust="spacingAndGlyphs">9 Oct 2024</text>
<rect x="158.1" y="483" width="1" height="5" fill="#BDBDBD"/>
<text x="159.4" y="494.8" textLength="45.5" lengthAdjust="spacingAndGlyphs">31 Oct 2024</text>
<rect x="214.7" y="483" width="1" height="5" fill="#BDBDBD"/>
<text x="216.0" y="494.8" textLength="47.0" lengthAdjust="spacingAndGlyphs">22 Nov 2024</text>
<rect x="271.3" y="483" width="1" height="5" fill="#BDBDBD"/>
<text x="272.6" y="494.8" textLength="45.0" lengthAdjust="spacingAndGlyphs">16 Dec 2024</text>
<rect x="327.9" y="483" width="1" height="5" fill="#BDBDBD"/>
<text x="329.2" y="494.8" textLength="38.8" lengthAdjust="spacingAndGlyphs">9 Jan 2025</text>
<rect x="384.5" y="483" width="1" height="5" fill="#BDBDBD"/>
<text x="385.8" y="494.8" textLength="44.0" lengthAdjust="spacingAndGlyphs">31 Jan 2025</text>
<rect x="441.1" y="483" width="1" height="5" fill="#BDBDBD"/>
<text x="442.4" y="494.8" textLength="45.0" lengthAdjust="spacingAndGlyphs">24 Feb 2025</text>
<rect x="497.7" y="483" width="1" height="5" fill="#BDBDBD"/>
<text x="499.0" y="494.8" textLength="44.8" lengthAdjust="spacingAndGlyphs">18 Mar 2025</text>
<rect x="554.3" y="483" width="1" height="5" fill="#BDBDBD"/>
<text x="555.6" y="494.8" textLength="40.0" lengthAdjust="spacingAndGlyphs">9 Apr 2025</text>
<rect x="610.9" y="483" width="1" height="5" fill="#BDBDBD"/>
<text x="612.2" y="494.8" textLength="43.2" lengthAdjust="spacingAndGlyphs">1 May 2025</text>
<rect x="772" y="350" width="28" height="9" fill="#7890AC"/>
<text x="775.3" y="357.8" style="fill:#111" textLength="29.5" lengthAdjust="spacingAndGlyphs">143.098</text>
<text x="30" y="15" style="font-size:8.4px;white-space:pre" xml:space="preserve" textLength="163.6" lengthAdjust="spacingAndGlyphs">USDJPY, Daily:  US Dollar vs Japanese Yen</text>
<g>
<rect x="-3" y="7.5" width="8.6" height="9" fill="#fff" stroke="#2E6DB0" stroke-width="1"/>
<rect x="-3" y="9" width="8" height="0.9" fill="#3A78B8"/>
<rect x="-3" y="11.3" width="8" height="1.4" fill="#8DB4DA"/>
<rect x="-3" y="14.2" width="8" height="0.9" fill="#3A78B8"/>
<path d="M12.1,7.6 H15.3 V11.6 H17.3 V16.4 H12.1 Z" fill="#fff" stroke="#D8123C" stroke-width="1"/>
<path d="M21.2,7.6 H24.6 V16.4 H19.1 V11.6 H21.2 Z" fill="#fff" stroke="#1E5A9C" stroke-width="1"/>
<rect x="16.3" y="7.7" width="3.7" height="1.6" fill="#fff" stroke="#777" stroke-width="0.8"/>
</g>
</svg></div></body></html>
